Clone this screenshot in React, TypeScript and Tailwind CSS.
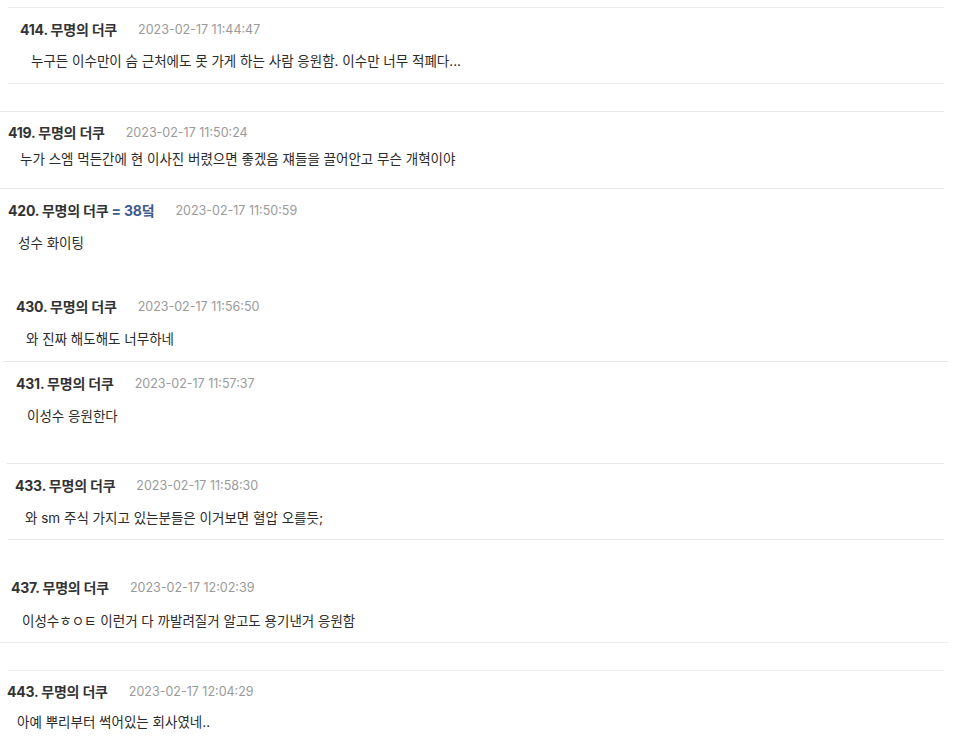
import React from 'react'

const font = { fontFamily: '"Inter", "Noto Sans CJK KR", sans-serif' }

function Header({ no, date, extra }: { no: string; date: string; extra?: string }) {
  return (
    <div className="flex items-center h-5 leading-5 whitespace-nowrap">
      <span className="text-[14px] font-bold text-[#333] tracking-[-0.2px]">
        {no}. 무명의 더쿠
        {extra && <span className="text-[#3e5b8c]"> {extra}</span>}
      </span>
      <span className="ml-[21px] text-[12.5px] text-[#9a9a9a]">{date}</span>
    </div>
  )
}

function Body({ children }: { children: React.ReactNode }) {
  return <div className="h-5 leading-5 text-[13.5px] text-[#2b2b2b] whitespace-nowrap">{children}</div>
}

export default function App() {
  return (
    <div className="w-[960px] h-[742px] overflow-hidden bg-white" style={font}>
      {/* 414 */}
      <div className="h-[7px]" />
      <div className="ml-[8px] mr-[16px] border-t border-[#ededed]" />
      <div className="pt-[12px] pl-[20px]">
        <Header no="414" date="2023-02-17 11:44:47" />
      </div>
      <div className="pt-[11px] pl-[31px]">
        <Body>누구든 이수만이 슴 근처에도 못 가게 하는 사람 응원함. 이수만 너무 적폐다...</Body>
      </div>
      <div className="h-[12px]" />
      <div className="ml-[8px] mr-[16px] border-t border-[#ededed]" />
      <div className="h-[27px]" />
      <div className="mr-[16px] border-t border-[#e8e8e8]" />

      {/* 419 */}
      <div className="pt-[11px] pl-[8px]">
        <Header no="419" date="2023-02-17 11:50:24" />
      </div>
      <div className="pt-[6px] pl-[20px]">
        <Body>누가 스엠 먹든간에 현 이사진 버렸으면 좋겠음 쟤들을 끌어안고 무슨 개혁이야</Body>
      </div>
      <div className="h-[19px]" />
      <div className="mr-[16px] border-t border-[#e8e8e8]" />

      {/* 420 */}
      <div className="pt-[12px] pl-[8px]">
        <Header no="420" date="2023-02-17 11:50:59" extra="= 38덬" />
      </div>
      <div className="pt-[12px] pl-[18px]">
        <Body>성수 화이팅</Body>
      </div>

      {/* 430 */}
      <div className="pt-[44px] pl-[16px]">
        <Header no="430" date="2023-02-17 11:56:50" />
      </div>
      <div className="pt-[12px] pl-[26px]">
        <Body>와 진짜 해도해도 너무하네</Body>
      </div>
      <div className="h-[12px]" />
      <div className="ml-[3px] mr-[12px] border-t border-[#e8e8e8]" />

      {/* 431 */}
      <div className="pt-[12px] pl-[16px]">
        <Header no="431" date="2023-02-17 11:57:37" />
      </div>
      <div className="pt-[12px] pl-[27px]">
        <Body>이성수 응원한다</Body>
      </div>
      <div className="h-[37px]" />
      <div className="ml-[7px] mr-[16px] border-t border-[#e8e8e8]" />

      {/* 433 */}
      <div className="pt-[12px] pl-[15px]">
        <Header no="433" date="2023-02-17 11:58:30" />
      </div>
      <div className="pt-[12px] pl-[25px]">
        <Body>와 sm 주식 가지고 있는분들은 이거보면 혈압 오를듯;</Body>
      </div>
      <div className="h-[11px]" />
      <div className="ml-[8px] mr-[16px] border-t border-[#e8e8e8]" />

      {/* 437 */}
      <div className="pt-[38px] pl-[11px]">
        <Header no="437" date="2023-02-17 12:02:39" />
      </div>
      <div className="pt-[13px] pl-[22px]">
        <Body>이성수ㅎㅇㅌ 이런거 다 까발려질거 알고도 용기낸거 응원함</Body>
      </div>
      <div className="h-[11px]" />
      <div className="mr-[12px] border-t border-[#ececec]" />
      <div className="h-[27px]" />
      <div className="ml-[8px] mr-[16px] border-t border-[#ececec]" />

      {/* 443 */}
      <div className="pt-[11px] pl-[7px]">
        <Header no="443" date="2023-02-17 12:04:29" />
      </div>
      <div className="pt-[10px] pl-[17px]">
        <Body>아예 뿌리부터 썩어있는 회사였네..</Body>
      </div>
    </div>
  )
}
